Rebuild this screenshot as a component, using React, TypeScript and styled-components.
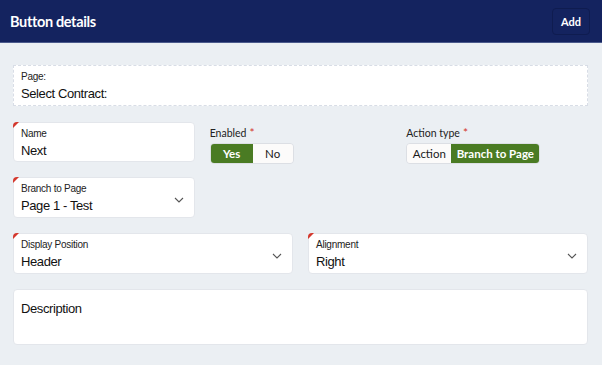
import React from 'react';
import styled, { createGlobalStyle } from 'styled-components';

const GlobalStyle = createGlobalStyle`
  html, body {
    margin: 0;
    padding: 0;
    background: #ebeff3;
  }
  body {
    font-family: 'Liberation Sans', Arial, sans-serif;
  }
`;

const Shell = styled.div`
  width: 602px;
  height: 365px;
  background: #ebeff3;
  overflow: hidden;
`;

const Header = styled.header`
  height: 43px;
  box-sizing: border-box;
  background: #14235f;
  border-bottom: 1px solid #4b5a8c;
  display: flex;
  align-items: center;
  justify-content: space-between;
  padding: 0 12px 0 10px;
`;

const Title = styled.h1`
  margin: 0;
  color: #fff;
  font-family: Lato, 'Noto Sans', sans-serif;
  font-size: 14.5px;
  font-weight: 700;
  letter-spacing: -0.35px;
`;

const AddButton = styled.button`
  height: 27px;
  margin-top: 1px;
  padding: 0 8px;
  background: #14235f;
  border: 1px solid #0f1c50;
  border-radius: 4px;
  color: #fff;
  font-family: Lato, 'Noto Sans', sans-serif;
  font-size: 11px;
  font-weight: 700;
`;

const Body = styled.main`
  padding: 22px 14px 0 13px;
  display: grid;
  grid-template-columns: repeat(6, 1fr);
  column-gap: 15px;
  row-gap: 15px;
`;

const PageBox = styled.div`
  grid-column: span 6;
  height: 41px;
  box-sizing: border-box;
  background: #fff;
  border: 1px dashed #d8dde6;
  padding: 5px 7px 0;
  margin-bottom: 1px;
`;

const SmallLabel = styled.div`
  font-size: 10px;
  color: #222;
  line-height: 12px;
  letter-spacing: -0.25px;
`;

const Value = styled.div`
  font-size: 13px;
  color: #111;
  line-height: 16px;
  margin-top: 3px;
  letter-spacing: -0.4px;
`;

const Field = styled.div<{ $span: number; $height?: number }>`
  grid-column: span ${(p) => p.$span};
  position: relative;
  height: ${(p) => p.$height ?? 41}px;
  box-sizing: border-box;
  background: #fff;
  border: 1px solid #e3e6eb;
  border-radius: 4px;
  padding: 5px 7px 0;
  display: flex;
  align-items: center;

  &::before {
    content: '';
    position: absolute;
    top: -1px;
    left: -1px;
    width: 0;
    height: 0;
    border-top: 6px solid #d4372c;
    border-right: 6px solid transparent;
    border-top-left-radius: 4px;
  }
`;

const PlainField = styled(Field)`
  align-items: flex-start;
  padding: 8px 7px 0;
  &::before {
    display: none;
  }
`;

const FieldText = styled.div`
  flex: 1;
  align-self: flex-start;
`;

const Chevron = styled.svg`
  width: 10px;
  height: 6px;
  margin-right: 3px;
  flex-shrink: 0;
`;

const ToggleGroup = styled.div<{ $span: number }>`
  grid-column: span ${(p) => p.$span};
  height: 40px;
  padding-top: 4px;
  box-sizing: border-box;
`;

const ToggleLabel = styled.div`
  font-family: Lato, 'Noto Sans', sans-serif;
  font-size: 10.5px;
  color: #222;
  line-height: 13px;
  margin-bottom: 3px;
`;

const Required = styled.span`
  color: #d4372c;
  margin-left: 3px;
  font-size: 12px;
`;

const Segmented = styled.div`
  display: inline-flex;
  height: 21px;
  border: 1px solid #dcdfe4;
  border-radius: 4px;
  overflow: hidden;
  box-sizing: border-box;
`;

const Segment = styled.span<{ $active?: boolean; $width: number }>`
  width: ${(p) => p.$width}px;
  display: flex;
  align-items: center;
  justify-content: center;
  font-family: Lato, 'Noto Sans', sans-serif;
  font-size: 11.5px;
  font-weight: ${(p) => (p.$active ? 700 : 400)};
  color: ${(p) => (p.$active ? '#fff' : '#1a1a1a')};
  background: ${(p) => (p.$active ? '#4a7b23' : '#fcfbfa')};
`;

const Spacer = styled.div<{ $span: number }>`
  grid-column: span ${(p) => p.$span};
`;

function Caret() {
  return (
    <Chevron viewBox="0 0 10 6">
      <path d="M1 1 L5 5 L9 1" fill="none" stroke="#555" strokeWidth="1.1" />
    </Chevron>
  );
}

function SelectField({ span, label, value }: { span: number; label: string; value: string }) {
  return (
    <Field $span={span}>
      <FieldText>
        <SmallLabel>{label}</SmallLabel>
        <Value>{value}</Value>
      </FieldText>
      <Caret />
    </Field>
  );
}

export default function App() {
  return (
    <Shell>
      <GlobalStyle />
      <Header>
        <Title>Button details</Title>
        <AddButton>Add</AddButton>
      </Header>
      <Body>
        <PageBox>
          <SmallLabel>Page:</SmallLabel>
          <Value>Select Contract:</Value>
        </PageBox>

        <Field $span={2} $height={40}>
          <FieldText>
            <SmallLabel>Name</SmallLabel>
            <Value>Next</Value>
          </FieldText>
        </Field>
        <ToggleGroup $span={2}>
          <ToggleLabel>
            Enabled<Required>*</Required>
          </ToggleLabel>
          <Segmented>
            <Segment $active $width={42}>Yes</Segment>
            <Segment $width={40}>No</Segment>
          </Segmented>
        </ToggleGroup>
        <ToggleGroup $span={2}>
          <ToggleLabel>
            Action type<Required>*</Required>
          </ToggleLabel>
          <Segmented>
            <Segment $width={44}>Action</Segment>
            <Segment $active $width={88}>Branch to Page</Segment>
          </Segmented>
        </ToggleGroup>

        <SelectField span={2} label="Branch to Page" value="Page 1 - Test" />
        <Spacer $span={4} />

        <SelectField span={3} label="Display Position" value="Header" />
        <SelectField span={3} label="Alignment" value="Right" />

        <PlainField $span={6} $height={56}>
          <Value>Description</Value>
        </PlainField>
      </Body>
    </Shell>
  );
}
